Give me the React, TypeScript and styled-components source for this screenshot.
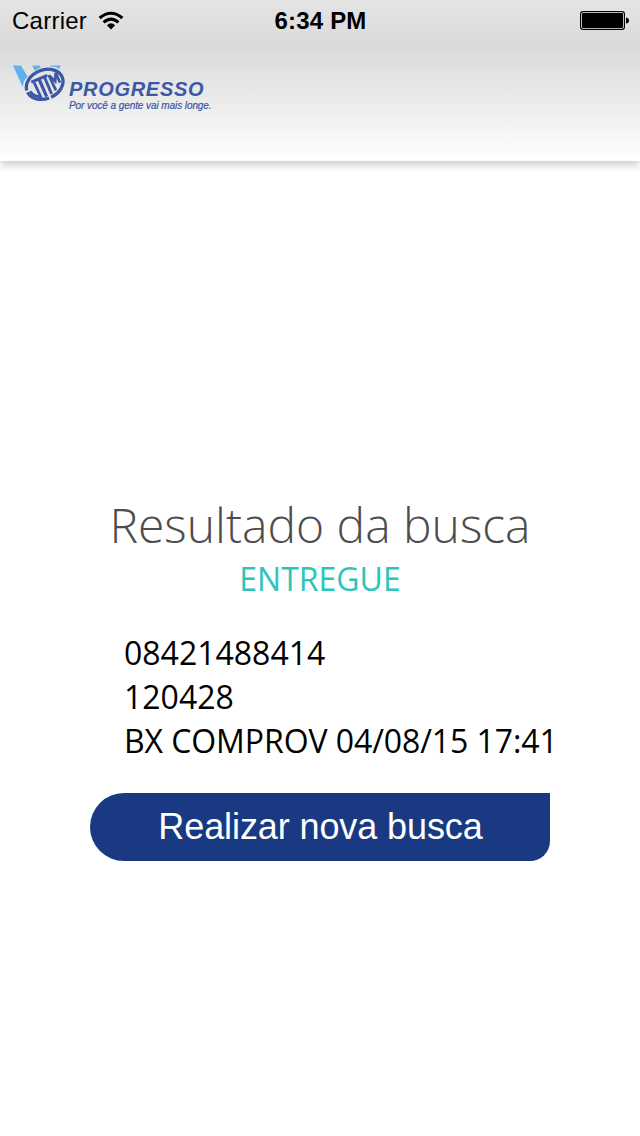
import React from 'react';
import styled, { createGlobalStyle } from 'styled-components';

const GlobalStyle = createGlobalStyle`
  * { box-sizing: border-box; }
  body { margin: 0; background: #fff; }
`;

const Screen = styled.div`
  width: 640px;
  height: 1136px;
  overflow: hidden;
  background: #fff;
  display: flex;
  flex-direction: column;
`;

const Header = styled.header`
  height: 161px;
  flex: none;
  background: linear-gradient(#e4e4e4 0, #dadada 48px, #fff 161px);
  box-shadow: 0 4px 8px rgba(0, 0, 0, 0.2);
`;

const StatusBar = styled.div`
  height: 40px;
  display: grid;
  grid-template-columns: 1fr auto 1fr;
  align-items: center;
  padding: 2px 11px 0 12px;
  font: 24px/38px 'Liberation Sans', Arial, sans-serif;
  color: #000;
`;

const Carrier = styled.div`
  display: flex;
  align-items: center;
  gap: 10.5px;
  letter-spacing: 0.25px;
`;

const Clock = styled.div`
  font-weight: bold;
  font-size: 24px;
  letter-spacing: 0.2px;
`;

const BatteryIcon = styled.svg`
  justify-self: end;
`;

const Brand = styled.div`
  display: flex;
  padding: 22px 0 0 12px;
  color: #3c57a6;
  font-family: 'Liberation Sans', Arial, sans-serif;
  font-style: italic;
  white-space: nowrap;
`;

const BrandText = styled.div`
  padding: 16px 0 0 4px;
`;

const BrandName = styled.div`
  font-size: 20px;
  line-height: 22px;
  font-weight: bold;
  letter-spacing: 0.7px;
`;

const Tagline = styled.div`
  font-size: 10px;
  line-height: 11px;
  letter-spacing: -0.08px;
  -webkit-text-stroke: 0.2px #3c57a6;
`;

const Result = styled.main`
  width: 460px;
  margin: 331px auto 0;
  display: flex;
  flex-direction: column;
  font-family: 'Open Sans', sans-serif;
`;

const Title = styled.h1`
  margin: 0;
  font-size: 48px;
  line-height: 65px;
  font-weight: 300;
  text-align: center;
  color: #4d4d4d;
  white-space: nowrap;
`;

const Status = styled.div`
  font-size: 32px;
  line-height: 44px;
  text-align: center;
  color: #2dc4ba;
`;

const Details = styled.div`
  padding: 30px 0 0 34px;
  font-size: 32px;
  line-height: 44px;
  color: #000;
  white-space: nowrap;
`;

const DetailLine = styled.div<{ $tight?: boolean }>`
  letter-spacing: ${({ $tight }) => ($tight ? '-0.08px' : 'normal')};
`;

const SearchButton = styled.button`
  margin: 30px 0 0;
  height: 68px;
  border: 0;
  padding: 0 0 0 1px;
  border-radius: 34px 0 20px 34px;
  background: #193a82;
  color: #fff;
  font: 36px/68px 'Liberation Sans', Arial, sans-serif;
  letter-spacing: -0.1px;
`;

const Wifi = () => (
  <svg width="26" height="20" viewBox="0 0 26 20" fill="none" stroke="#000" strokeWidth="3">
    <path d="M1.6 7Q13 -2.6 24.4 7" />
    <path d="M5.6 11.4Q13 4.8 20.4 11.4" />
    <path d="M8.9 14.2Q13 10.2 17.1 14.2L13 18.4Z" fill="#000" stroke="none" />
  </svg>
);

const Battery = () => (
  <BatteryIcon width="49" height="20" viewBox="0 0 49 20">
    <rect x="0.6" y="0.6" width="43.8" height="17.8" rx="2.4" fill="#f2f2f2" stroke="#000" strokeWidth="1.2" />
    <rect x="2" y="2" width="41" height="15" rx="1" fill="#000" />
    <path d="M46 6.5Q49 7 49 9.5T46 12.5Z" />
  </BatteryIcon>
);

const Logo = () => (
  <svg width="53" height="42" viewBox="0 0 53 42">
    <path
      d="M1 3.4H9L15.6 14.6Q11 19 10.8 25.2Z M20.3 3.4H27.8L28.8 5.6L22.6 8.4Z M37.8 3.4H48.8L47.2 7Q44 4.6 39 4.6Z"
      fill="#62b0f0"
    />
    <g fill="none" stroke="#3c57a6">
      <ellipse
        rx="18.9"
        ry="14.4"
        transform="translate(32.7 22.3) rotate(-22)"
        pathLength="100"
        strokeDasharray="24 2 23 2 49"
        strokeWidth="3.3"
      />
      <path d="M19.3 20.2L35.3 13.4" strokeWidth="2.9" />
      <path d="M27 17L34.6 34.6" strokeWidth="3.3" />
      <path d="M22.2 20.6L28.6 34.5Q22 34.8 18.2 29.2" strokeWidth="2.8" />
      <path d="M32.4 15L39.6 32" strokeWidth="3" />
      <path d="M36.8 13.2L43.9 28.4" strokeWidth="2.8" />
      <path d="M37.4 13.6L43.2 19.2L43.6 10.8L48 20.6" strokeWidth="2.6" />
    </g>
  </svg>
);

export default function App() {
  return (
    <>
      <GlobalStyle />
      <Screen>
        <Header>
          <StatusBar>
            <Carrier>
              Carrier
              <Wifi />
            </Carrier>
            <Clock>6:34 PM</Clock>
            <Battery />
          </StatusBar>
          <Brand>
            <Logo />
            <BrandText>
              <BrandName>PROGRESSO</BrandName>
              <Tagline>Por você a gente vai mais longe.</Tagline>
            </BrandText>
          </Brand>
        </Header>
        <Result>
          <Title>Resultado da busca</Title>
          <Status>ENTREGUE</Status>
          <Details>
            <DetailLine>08421488414</DetailLine>
            <DetailLine>120428</DetailLine>
            <DetailLine $tight>BX COMPROV 04/08/15 17:41</DetailLine>
          </Details>
          <SearchButton>Realizar nova busca</SearchButton>
        </Result>
      </Screen>
    </>
  );
}
